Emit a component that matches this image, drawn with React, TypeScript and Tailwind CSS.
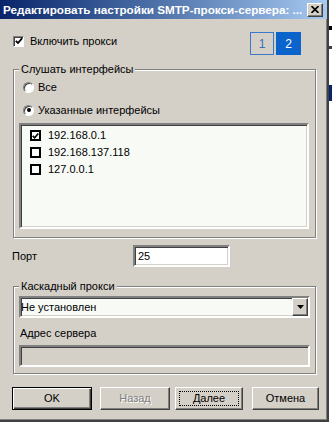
import React from "react";

const font = "font-['Liberation_Sans',Arial,sans-serif]";

const raised =
  "border border-t-white border-l-white border-r-[#404040] border-b-[#404040] shadow-[inset_-1px_-1px_0_#808080]";
const sunken =
  "border-2 border-t-[#808080] border-l-[#808080] border-r-white border-b-white shadow-[inset_1px_1px_0_#404040,inset_-1px_-1px_0_#d4d0c8]";

const Check = () => (
  <svg width="8" height="8" viewBox="0 0 8 8">
    <path d="M0.8 3.8 L3 6 L7.2 1.2" fill="none" stroke="#000" strokeWidth="1.8" />
  </svg>
);

const GroupBox: React.FC<{ title: string; children: React.ReactNode; className?: string }> = ({
  title,
  children,
  className = "",
}) => (
  <div
    className={`relative ml-[1px] w-[303px] border border-[#808080] shadow-[1px_1px_0_#fff,inset_1px_1px_0_#fff] ${className}`}
  >
    <span className="absolute -top-[8px] left-[5px] h-[14px] bg-[#d4d0c8] px-[2px] leading-[14px]">
      {title}
    </span>
    {children}
  </div>
);

const Radio: React.FC<{ label: string; checked?: boolean }> = ({ label, checked }) => (
  <div className="flex h-[14px] items-center pl-[9px]">
    <div className="flex h-[11px] w-[11px] items-center justify-center rounded-full border border-t-[#808080] border-l-[#808080] border-r-white border-b-white bg-white shadow-[inset_1px_1px_0_#404040]">
      {checked && <div className="h-[4px] w-[4px] rounded-full bg-black" />}
    </div>
    <span className="ml-[4px]">{label}</span>
  </div>
);

const interfaces = [
  { ip: "192.168.0.1", on: true },
  { ip: "192.168.137.118", on: false },
  { ip: "127.0.0.1", on: false },
];

export default function App() {
  return (
    <div className={`flex h-[427px] w-[332px] bg-white text-[11px] text-black ${font}`}>
      <div className="flex h-[422px] w-[329px] flex-col border-r-2 border-b-2 border-r-[#404040] border-b-[#404040] bg-[#d4d0c8] shadow-[inset_-1px_-1px_0_#808080]">
        {/* title bar */}
        <div className="flex h-[19px] items-center bg-gradient-to-r from-[#0a246a] to-[#a6caf0] pl-[3px] pr-[4px]">
          <span className="flex-1 overflow-hidden whitespace-nowrap text-[11.7px] font-bold text-white">
            Редактировать настройки SMTP-прокси-сервера: ...
          </span>
          <div className={`ml-[3px] flex h-[14px] w-[16px] items-center justify-center bg-[#d4d0c8] ${raised}`}>
            <svg width="8" height="7" viewBox="0 0 8 7">
              <path d="M0.5 0 L7.5 7 M7.5 0 L0.5 7" stroke="#000" strokeWidth="1.6" />
            </svg>
          </div>
        </div>

        <div className="flex flex-col pl-[12px]">
          {/* enable + pages */}
          <div className="mt-[13px] flex h-[23px] items-start">
            <div className="ml-[1px] mt-[2px] flex items-center">
              <div className="flex h-[11px] w-[11px] items-center justify-center border border-t-[#808080] border-l-[#808080] border-r-white border-b-white bg-white shadow-[inset_1px_1px_0_#404040]">
                <Check />
              </div>
              <span className="ml-[6px] leading-[14px]">Включить прокси</span>
            </div>
            <div className="ml-auto mr-[26px] flex gap-[2px] text-[12px]">
              <div className="flex h-[23px] w-[24px] items-center justify-center border border-[#3a78c8] text-[#3a6fb8]">
                1
              </div>
              <div className="flex h-[23px] w-[25px] items-center justify-center bg-[#0b63cc] text-white">2</div>
            </div>
          </div>

          {/* listen interfaces */}
          <GroupBox title="Слушать интерфейсы" className="mt-[14px] pt-[10px] pb-[8px]">
            <Radio label="Все" />
            <div className="mt-[9px]">
              <Radio label="Указанные интерфейсы" checked />
            </div>
            <div className={`ml-[5px] mt-[6px] h-[106px] w-[290px] bg-[#f7faf5] pt-[2px] pl-[9px] ${sunken}`}>
              {interfaces.map((it) => (
                <div key={it.ip} className="flex h-[17px] items-center gap-[7px]">
                  <div className="flex h-[11px] w-[11px] items-center justify-center border-2 border-black bg-white">
                    {it.on && <Check />}
                  </div>
                  <span>{it.ip}</span>
                </div>
              ))}
            </div>
          </GroupBox>

          {/* port */}
          <div className="mt-[7px] flex h-[22px] items-center">
            <span className="w-[121px]">Порт</span>
            <div className={`flex h-[22px] w-[97px] items-center bg-white pl-[3px] ${sunken}`}>25</div>
          </div>

          {/* cascade proxy */}
          <GroupBox title="Каскадный прокси" className="mt-[19px] pt-[9px] pb-[6px]">
            <div className={`ml-[5px] flex h-[22px] w-[291px] items-center bg-[#f7faf5] ${sunken}`}>
              <span className="flex-1">Не установлен</span>
              <div className={`flex h-[18px] w-[16px] items-center justify-center bg-[#d4d0c8] ${raised}`}>
                <svg width="7" height="4" viewBox="0 0 7 4">
                  <path d="M0 0 H7 L3.5 4 Z" fill="#000" />
                </svg>
              </div>
            </div>
            <div className="ml-[6px] mt-[8px] h-[14px] leading-[14px]">Адрес сервера</div>
            <div className={`ml-[5px] mt-[5px] h-[22px] w-[291px] bg-[#d4d0c8] ${sunken}`} />
          </GroupBox>

          {/* buttons */}
          <div className="mt-[13px] flex h-[23px]">
            <div className="flex w-[80px] items-center justify-center border border-black shadow-[inset_1px_1px_0_#fff,inset_-1px_-1px_0_#404040,inset_-2px_-2px_0_#808080]">
              OK
            </div>
            <div className={`ml-[8px] flex w-[70px] items-center justify-center text-[#808080] [text-shadow:1px_1px_0_#fff] ${raised}`}>
              Назад
            </div>
            <div className={`ml-[5px] flex w-[68px] p-[3px] ${raised}`}>
              <div className="flex flex-1 items-center justify-center border border-dotted border-black">Далее</div>
            </div>
            <div className={`ml-[9px] flex w-[67px] items-center justify-center ${raised}`}>Отмена</div>
          </div>
        </div>
      </div>
      {/* sliver of the window behind */}
      <div className="flex w-[3px] flex-col bg-white">
        <div className="mt-[26px] h-[4px] bg-black" />
        <div className="mt-[16px] h-[3px] bg-[#404040]" />
        <div className="mt-[36px] h-[16px] bg-[#0a246a]" />
      </div>
    </div>
  );
}
